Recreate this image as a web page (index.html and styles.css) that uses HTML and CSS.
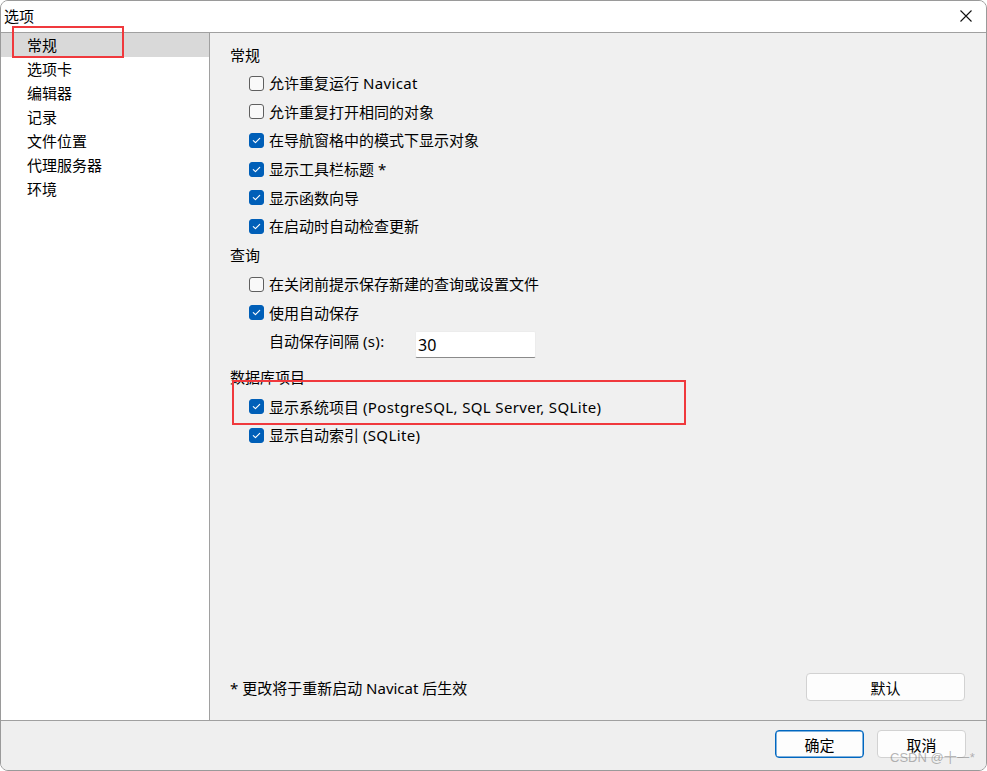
FILE: index.html
```html
<!DOCTYPE html>
<html lang="zh-CN">
<head>
<meta charset="utf-8">
<title>选项</title>
<link rel="stylesheet" href="styles.css">
</head>
<body>
<div class="window">
  <div class="titlebar">
    <span class="title">选项</span>
    <span class="close" aria-label="关闭">
      <svg width="12" height="12" viewBox="0 0 12 12"><path d="M0.5 0.5 L11.5 11.5 M11.5 0.5 L0.5 11.5" stroke="#111" stroke-width="1.1" fill="none"/></svg>
    </span>
  </div>
  <div class="main">
    <ul class="sidebar">
      <li class="nav-item active">常规</li>
      <li class="nav-item">选项卡</li>
      <li class="nav-item">编辑器</li>
      <li class="nav-item">记录</li>
      <li class="nav-item">文件位置</li>
      <li class="nav-item">代理服务器</li>
      <li class="nav-item">环境</li>
    </ul>
    <div class="content">
      <div class="settings">
        <div class="group-title first">常规</div>
        <label class="row"><span class="cb"></span><span>允许重复运行 <span class="latin">Navicat</span></span></label>
        <label class="row"><span class="cb"></span>允许重复打开相同的对象</label>
        <label class="row"><span class="cb checked"><svg viewBox="0 0 15 15"><path d="M3.8 7.6 L6.3 10 L11.2 5" /></svg></span>在导航窗格中的模式下显示对象</label>
        <label class="row"><span class="cb checked"><svg viewBox="0 0 15 15"><path d="M3.8 7.6 L6.3 10 L11.2 5" /></svg></span>显示工具栏标题 *</label>
        <label class="row"><span class="cb checked"><svg viewBox="0 0 15 15"><path d="M3.8 7.6 L6.3 10 L11.2 5" /></svg></span>显示函数向导</label>
        <label class="row"><span class="cb checked"><svg viewBox="0 0 15 15"><path d="M3.8 7.6 L6.3 10 L11.2 5" /></svg></span>在启动时自动检查更新</label>

        <div class="group-title query">查询</div>
        <label class="row"><span class="cb"></span>在关闭前提示保存新建的查询或设置文件</label>
        <label class="row"><span class="cb checked"><svg viewBox="0 0 15 15"><path d="M3.8 7.6 L6.3 10 L11.2 5" /></svg></span>使用自动保存</label>
        <div class="row field">
          <span class="field-label">自动保存间隔 <span class="latin">(s):</span></span>
          <span class="input">30</span>
        </div>

        <div class="group-title spaced">数据库项目</div>
        <label class="row"><span class="cb checked"><svg viewBox="0 0 15 15"><path d="M3.8 7.6 L6.3 10 L11.2 5" /></svg></span><span>显示系统项目 <span class="latin">(PostgreSQL, SQL Server, SQLite)</span></span></label>
        <label class="row"><span class="cb checked"><svg viewBox="0 0 15 15"><path d="M3.8 7.6 L6.3 10 L11.2 5" /></svg></span><span>显示自动索引 <span class="latin">(SQLite)</span></span></label>
      </div>
      <div class="note-row">
        <span class="note">* 更改将于重新启动 Navicat 后生效</span>
        <button class="btn wide">默认</button>
      </div>
    </div>
  </div>
  <div class="footer">
    <button class="btn primary">确定</button>
    <button class="btn">取消</button>
  </div>

  <div class="mark mark-nav"></div>
  <div class="mark mark-option"></div>
  <div class="watermark">CSDN @十一*</div>
</div>
</body>
</html>
```

FILE: styles.css
```css
* { box-sizing: border-box; }

html, body {
  margin: 0;
  padding: 0;
  background: #ffffff;
}

body {
  font-family: "Noto Sans", "Noto Sans CJK SC", sans-serif;
  font-size: 15px;
  color: #000;
}

.window {
  position: relative;
  width: 987px;
  height: 771px;
  border: 1px solid #9a9a9a;
  border-radius: 8px;
  overflow: hidden;
  display: flex;
  flex-direction: column;
  background: #efefef;
}

.titlebar {
  height: 32px;
  flex: 0 0 32px;
  background: #ffffff;
  border-bottom: 1px solid #a0a0a0;
  display: flex;
  align-items: center;
  justify-content: space-between;
  padding: 0 14px 0 3px;
}

.title { line-height: 31px; }

.close {
  display: flex;
  width: 12px;
  height: 12px;
  margin-top: -2px;
}

.main {
  flex: 1;
  display: flex;
  min-height: 0;
}

.sidebar {
  list-style: none;
  margin: 0;
  padding: 0;
  width: 209px;
  flex: 0 0 209px;
  background: #ffffff;
  border-right: 1px solid #a0a0a0;
}

.nav-item {
  height: 24px;
  line-height: 24px;
  padding-left: 26px;
  white-space: nowrap;
}

.nav-item.active { background: #d9d9d9; }

.content {
  flex: 1;
  background: #f0f0f0;
  display: flex;
  flex-direction: column;
  padding: 8.5px 21px 19px 20px;
}

.settings { flex: 1; }

.group-title {
  height: 28.6px;
  line-height: 28.6px;
}

.group-title.first {
  height: 27px;
  line-height: 27px;
}

.group-title.query { margin-top: 0.6px; }

.group-title.spaced { margin-top: 8.4px; }

.row {
  height: 28.6px;
  display: flex;
  align-items: center;
  gap: 5px;
  padding-left: 19px;
  white-space: nowrap;
}

.latin { letter-spacing: 0.36px; }

.cb {
  width: 15px;
  height: 15px;
  flex: 0 0 15px;
  border: 1px solid #5f5f5f;
  border-radius: 3px;
  background: #f9f9f9;
  display: flex;
  margin-top: 1px;
}

.cb.checked {
  background: #005fb8;
  border-color: #005fb8;
}

.cb svg {
  width: 13px;
  height: 13px;
}

.cb svg path {
  fill: none;
  stroke: #ffffff;
  stroke-width: 1.3;
  stroke-linecap: round;
  stroke-linejoin: round;
}

.row.field {
  padding-left: 39px;
  gap: 0;
}

.field-label { width: 146px; }

.input {
  width: 121px;
  height: 27px;
  margin-top: 7px;
  background: #ffffff;
  border: 1px solid #ececec;
  border-bottom: 1px solid #8a8a8a;
  border-radius: 2px;
  padding-left: 2px;
  line-height: 26px;
  font-size: 16px;
}

.note-row {
  display: flex;
  align-items: center;
  justify-content: space-between;
}

.btn {
  font: inherit;
  color: #000;
  height: 28px;
  width: 89px;
  background: #fdfdfd;
  border: 1px solid #d2d2d2;
  border-radius: 4px;
  padding: 0;
}

.btn.wide { width: 159px; }

.btn.primary {
  border-color: #0067c0;
  box-shadow: inset 0 0 0 0.5px #0067c0;
}

.footer {
  flex: 0 0 50px;
  height: 50px;
  border-top: 1px solid #a0a0a0;
  background: #efefef;
  display: flex;
  justify-content: flex-end;
  gap: 13px;
  padding: 9px 20px 0 0;
}

/* annotation overlays */
.mark {
  position: absolute;
  border: 2px solid #f0393d;
  pointer-events: none;
}

.mark-nav {
  left: 11px;
  top: 25px;
  width: 112px;
  height: 32px;
}

.mark-option {
  left: 231px;
  top: 379px;
  width: 454px;
  height: 45px;
}

.watermark {
  position: absolute;
  left: 889px;
  top: 746px;
  font-family: "Liberation Sans", "Noto Sans CJK SC", sans-serif;
  font-size: 13px;
  color: rgba(120, 120, 120, 0.55);
  pointer-events: none;
  white-space: nowrap;
}
```
